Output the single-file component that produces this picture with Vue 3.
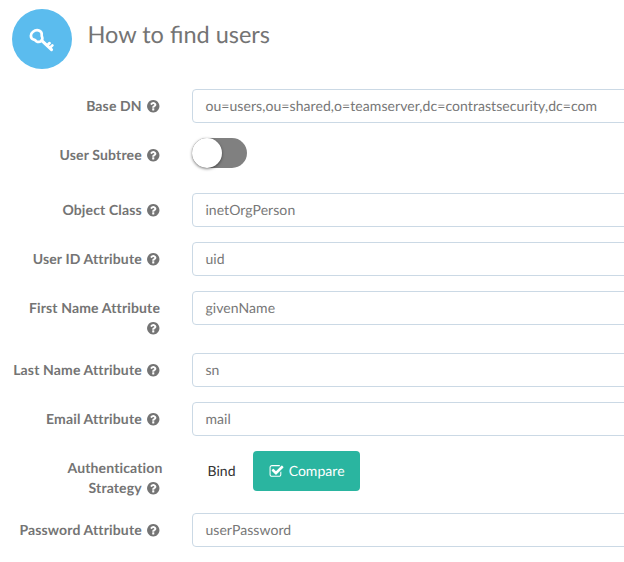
<script setup>
const rows = [
  { lines: ['Base DN'], value: 'ou=users,ou=shared,o=teamserver,dc=contrastsecurity,dc=com' },
  { lines: ['User Subtree'], type: 'switch' },
  { lines: ['Object Class'], value: 'inetOrgPerson' },
  { lines: ['User ID Attribute'], value: 'uid' },
  { lines: ['First Name Attribute', ''], value: 'givenName' },
  { lines: ['Last Name Attribute'], value: 'sn' },
  { lines: ['Email Attribute'], value: 'mail' },
  { lines: ['Authentication', 'Strategy'], type: 'choice' },
  { lines: ['Password Attribute'], value: 'userPassword' },
]
</script>

<template>
  <main class="panel">
    <header class="head">
      <span class="badge">
        <svg width="32" height="32" viewBox="0 0 32 32" fill="none" stroke="#fff" stroke-linecap="round" stroke-linejoin="round">
          <path d="M15.300 17.700C13.900 19 11.800 19.100 10.500 18.300C9.600 17.700 9.300 16.900 8 16.700C6 16.300 4.900 14.800 4.900 12.800C4.900 11.300 5.600 9.900 7 8.800C8.700 7.400 11.700 6.900 13.500 7.700C15.200 8.500 15.900 10.200 15.700 11.700C15.600 12.800 15.700 13.300 16.100 14.100C16.600 15.400 16.400 16.700 15.300 17.700Z" stroke-width="2.700" />
          <path d="M15.800 17.700L25.500 26.600" stroke-width="3.100" />
          <path d="M21.300 22.300L23.600 20.100M24.200 24.600L26.400 22.400" stroke-width="2.700" />
        </svg>
      </span>
      <h1>How to find users</h1>
    </header>
    <form class="form">
      <div v-for="row in rows" :key="row.lines[0]" class="row">
        <label class="label" :class="{ flush: row.type === 'choice' }">
          <span v-for="(line, i) in row.lines" :key="i" class="line">
            <span>{{ line }}</span>
            <svg v-if="i === row.lines.length - 1" class="help" width="14.5" height="14.5" viewBox="0 0 1792 1792" fill="currentColor"><path d="M1024 1376v-192q0-14-9-23t-23-9h-192q-14 0-23 9t-9 23v192q0 14 9 23t23 9h192q14 0 23-9t9-23zM1280 704q0-88-55.500-163t-138.500-116-170-41q-243 0-371 213-15 24 8 42l132 100q7 6 19 6 16 0 25-12 53-68 86-92 34-24 86-24 48 0 85.500 26t37.500 59q0 38-20 61t-68 45q-63 28-115.500 86.500t-52.500 125.500v36q0 14 9 23t23 9h192q14 0 23-9t9-23q0-19 21.500-49.500t54.500-49.500q32-18 49-28.500t46-35 44.500-48 28-60.500 12.500-81zM1664 896q0 209-103 385.500t-279.500 279.500-385.500 103-385.500-103-279.500-279.500-103-385.500 103-385.500 279.500-279.500 385.500-103 385.500 103 279.500 279.500 103 385.500z" /></svg>
          </span>
        </label>
        <div v-if="row.type === 'switch'" class="switch"><span class="knob"></span></div>
        <div v-else-if="row.type === 'choice'" class="choice">
          <button type="button" class="btn">Bind</button>
          <button type="button" class="btn active">
            <svg width="15" height="15" viewBox="0 0 1792 1792" fill="currentColor"><path d="M1472 930v318q0 119-84.500 203.500t-203.500 84.500h-832q-119 0-203.500-84.500t-84.500-203.500v-832q0-119 84.500-203.500t203.500-84.500h832q63 0 117 25 15 7 18 23 3 17-9 29l-49 49q-10 10-23 10-3 0-9-2-23-6-45-6h-832q-66 0-113 47t-47 113v832q0 66 47 113t113 47h832q66 0 113-47t47-113v-254q0-13 9-22l64-64q10-10 23-10 6 0 12 3 20 8 20 29zM1703 441l-814 814q-24 24-57 24t-57-24l-430-430q-24-24-24-57t24-57l110-110q24-24 57-24t57 24l263 263 647-647q24-24 57-24t57 24l110 110q24 24 24 57t-24 57z" /></svg>
            <span>Compare</span>
          </button>
        </div>
        <input v-else class="field" type="text" :value="row.value" />
      </div>
    </form>
  </main>
</template>

<style>
body { background: #fff; overflow: hidden; }
</style>

<style scoped>
.panel {
  box-sizing: border-box;
  height: 562px;
  padding-top: 9px;
  overflow: hidden;
  font-family: Lato, "Liberation Sans", sans-serif;
  font-size: 14px;
  line-height: 20px;
  color: #747474;
  text-rendering: geometricPrecision;
}
.head { display: flex; gap: 15.5px; padding-left: 12px; height: 80px; }
.badge {
  display: flex;
  align-items: center;
  justify-content: center;
  width: 60px;
  height: 60px;
  border-radius: 50%;
  background: #5bbcee;
}
h1 { margin: 11px 0 0; font-size: 23.5px; font-weight: 400; line-height: 30px; }
.form { display: flex; flex-direction: column; gap: 15px; }
.row { display: grid; grid-template-columns: 162px 460px; column-gap: 30px; align-items: start; }
.label {
  display: flex;
  flex-direction: column;
  padding: 7px 2px 0 0;
  font-weight: 700;
  letter-spacing: 0.14px;
}
.line { display: flex; align-items: center; justify-content: flex-end; height: 20px; gap: 4.4px; }
.flush .line:first-child { margin-right: -2.5px; }
.help { margin-right: -0.7px; }
.field {
  box-sizing: border-box;
  width: 460px;
  height: 34px;
  padding: 5px 12px 7px 12.4px;
  border: 1px solid #cbd9e5;
  border-radius: 4px;
  background: #fff;
  color: #777;
  font: inherit;
  letter-spacing: 0.07px;
  text-rendering: inherit;
  outline: none;
}
.switch {
  width: 55px;
  height: 30px;
  margin-bottom: 10px;
  border-radius: 15px;
  background: #808080;
}
.knob {
  display: block;
  width: 30px;
  height: 30px;
  border-radius: 50%;
  background: #fff;
  box-shadow: 0 1px 3px rgba(0, 0, 0, 0.5);
}
.choice { display: flex; gap: 1px; height: 40px; }
.btn {
  display: flex;
  align-items: center;
  gap: 5px;
  height: 40px;
  padding: 0 16px 0 15.500px;
  border: 0;
  border-radius: 4px;
  background: none;
  color: #333;
  font: inherit;
  letter-spacing: 0.05px;
  text-rendering: inherit;
}
.active { padding: 0 15px 0 16px; background: #2ab5a0; color: #fff; }
</style>
